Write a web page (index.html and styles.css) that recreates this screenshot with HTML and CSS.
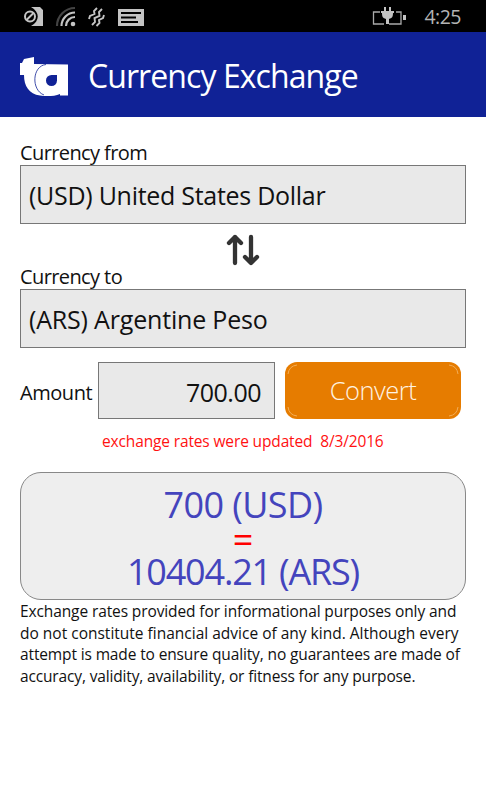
FILE: index.html
```html
<!DOCTYPE html>
<html lang="en">
<head>
<meta charset="utf-8">
<title>Currency Exchange</title>
<link rel="stylesheet" href="styles.css">
</head>
<body>
<div class="status">
  <svg class="status-icons" width="160" height="32" viewBox="0 0 160 32">
    <path d="M31 7h9l3 3v16H31c9-5 9-14 0-19z" fill="#c4c4c4"/>
    <g fill="none" stroke="#c4c4c4" stroke-width="2"><circle cx="30" cy="16.500" r="5"/><path d="M26.500 20l7-7"/></g>
    <g fill="none" stroke-width="2.200"><path d="M57 26A18 18 0 0 1 75 8" stroke="#444"/><path d="M61.500 26A13.500 13.500 0 0 1 75 12.500M66 26a9 9 0 0 1 9-9" stroke="#c4c4c4"/></g>
    <circle cx="73" cy="24" r="2.300" fill="#c4c4c4"/>
    <path d="M97 8l-3 3 .5 3-4.500 2-1 3M102 9l-3 3 .5 4-5 2 .5 4-3 3M104 15l-1 3-4 2 .5 3-3 3" fill="none" stroke="#c4c4c4" stroke-width="1.900"/>
    <path d="M118 9h26v17h-26z" fill="#c4c4c4"/>
    <path d="M121 13h20M121 17.500h15M121 22h17" stroke="#000" stroke-width="2"/>
  </svg>
  <div class="status-right">
    <svg width="36" height="32" viewBox="0 0 36 32">
      <path d="M8 12H1.500v12H12M24 12h5v12H17" fill="none" stroke="#aaa" stroke-width="1.300"/>
      <path d="M31 15h3v5h-3z" fill="#c4c4c4"/>
      <path d="M12 7h2v4h3V7h2v4h3v2h-1c0 4-1 5-4 6v5h-3v-5c-3-1-4-2-4-6H9v-2h3z" fill="#c4c4c4"/>
    </svg>
    <span class="time">4:25</span>
  </div>
</div>
<header class="header">
  <svg class="logo" width="50" height="42" viewBox="0 0 50 42">
    <path d="M0 8h2l2-4 10-2v7l34 .500v31h-8V39c-6 2.500-14 2.500-20 1.500C9 39 4 31 4 20H0z" fill="#fff"/>
    <path d="M26 9.500C12 11 11 35 24 40" fill="none" stroke="#102296" stroke-width=".8"/>
    <path d="M37 20v5.500a5.500 5.500 0 1 1-5.500-5.500z" fill="#102296"/>
  </svg>
  <h1 class="title">Currency Exchange</h1>
</header>
<main class="content">
  <div class="label">Currency from</div>
  <div class="field"><span class="from">(USD) United States Dollar</span></div>
  <div class="swap">
    <svg width="34" height="32" viewBox="0 0 34 32"><path d="M9 29V3M3 9l6-6 6 6M25 3v26M19 23l6 6 6-6" fill="none" stroke="#333" stroke-width="4.300" stroke-linecap="round" stroke-linejoin="round"/></svg>
  </div>
  <div class="label">Currency to</div>
  <div class="field"><span class="to">(ARS) Argentine Peso</span></div>
  <div class="amount-row">
    <span class="amount-label">Amount</span>
    <div class="amount">700.00</div>
    <button class="convert">
      <svg class="corners" width="176" height="57" viewBox="0 0 176 57"><path d="M3 12q1-8 9-9M164 3q8 1 9 9M3 45q1 8 9 9M164 54q8-1 9-9" fill="none" stroke="#f2ad58" stroke-width="1"/></svg>
      <span>Convert</span>
    </button>
  </div>
  <div class="updated">exchange rates were updated&nbsp; 8/3/2016</div>
  <section class="result">
    <div class="sum source">700 (USD)</div>
    <div class="equals">=</div>
    <div class="sum target">10404.21 (ARS)</div>
  </section>
  <p class="note"><span class="n1">Exchange rates provided for informational purposes only and</span><br><span class="n2">do not constitute financial advice of any kind. Although every</span><br><span class="n3">attempt is made to ensure quality, no guarantees are made of</span><br><span class="n4">accuracy, validity, availability, or fitness for any purpose.</span></p>
</main>
</body>
</html>
```
FILE: styles.css
```css
* { box-sizing: border-box; }
body { margin: 0; background: #fff; color: #111; font-family: "Open Sans", "Noto Sans", sans-serif; }
.status { height: 32px; background: #000; display: flex; justify-content: space-between; }
.status-right { display: flex; padding-right: 25px; gap: 16px; }
.time { color: #b4b4b4; font-size: 19.500px; line-height: 34px; letter-spacing: -.5px; }
.header { height: 85px; background: #102296; display: flex; padding: 23px 0 0 20px; }
.title { margin: 0 0 0 18px; color: #fff; font-size: 32px; line-height: 42px; font-weight: 400; letter-spacing: -.92px; white-space: nowrap; }
.content { padding: 24px 20px 0; }
.label { font-size: 20px; line-height: 23px; height: 24px; letter-spacing: -.6px; }
.field { height: 59px; border: 1px solid #777; background: #e9e9e9; padding: 0 8px; font-size: 25px; line-height: 58px; white-space: nowrap; }
.from { letter-spacing: -.28px; }
.to { letter-spacing: -.18px; }
.swap { height: 41px; display: flex; justify-content: center; padding-top: 10px; }
.amount-row { display: flex; margin-top: 14px; height: 58px; }
.amount-label { width: 78px; font-size: 20px; line-height: 61px; letter-spacing: -.45px; }
.amount { width: 177px; height: 57px; border: 1px solid #777; background: #e9e9e9; text-align: right; padding-right: 13px; font-size: 25px; line-height: 58px; letter-spacing: -.5px; }
.convert { position: relative; width: 176px; height: 57px; margin: 0 0 0 10px; border: 0; border-radius: 12px; background: #e67c00; color: #fff3e2; font: 300 25.500px/57px "Open Sans", sans-serif; letter-spacing: -.5px; padding: 0; }
.corners { position: absolute; left: 0; top: 0; }
.updated { color: #f11; font-size: 15.500px; line-height: 22px; margin: 10px 0 0 82px; white-space: nowrap; letter-spacing: -.14px; }
.result { height: 128px; margin-top: 20px; border: 1px solid #888; border-radius: 21px; background: #eee; text-align: center; color: #4444bd; font-size: 36px; }
.sum { line-height: 48px; height: 48px; white-space: nowrap; }
.source { margin-top: 8px; letter-spacing: -.6px; }
.equals { color: #f00; height: 20px; line-height: 22px; }
.target { line-height: 46px; letter-spacing: -1.200px; }
.note { margin: 1px 0 0; font-size: 15.500px; line-height: 21.600px; white-space: nowrap; }
.n1 { letter-spacing: -.11px; }
.n2 { letter-spacing: 0; }
.n3 { letter-spacing: -.13px; }
.n4 { letter-spacing: -.15px; }
```
